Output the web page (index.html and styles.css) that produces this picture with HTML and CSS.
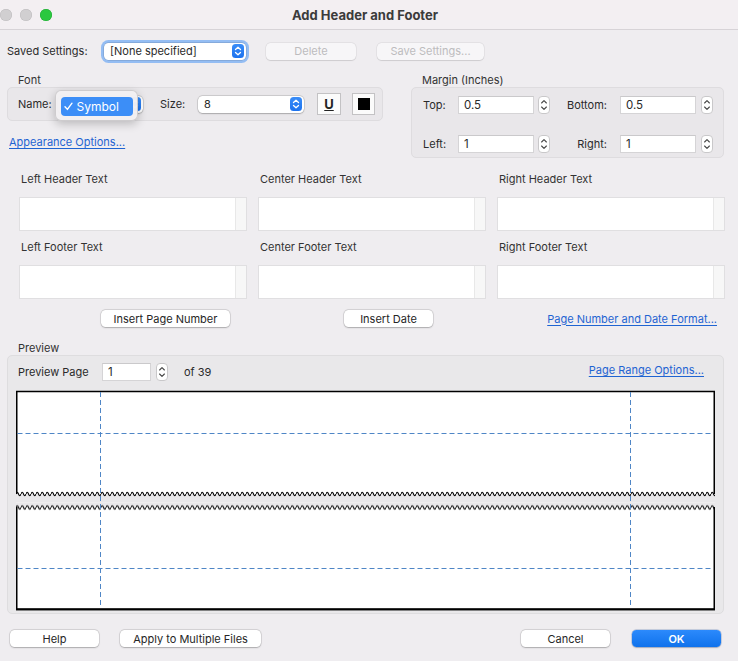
FILE: index.html
```html
<!DOCTYPE html>
<html>
<head>
<meta charset="utf-8">
<link rel="stylesheet" href="styles.css">
</head>
<body>
<div class="window">
  <div class="titlebar">
    <div class="lights"><span class="light gray"></span><span class="light gray"></span><span class="light green"></span></div>
    <div class="title">Add Header and Footer</div>
    <div></div>
  </div>

  <div class="saved-row">
    <span class="saved-label">Saved Settings:</span>
    <div class="select saved-select focus">
      <span class="select-text">[None specified]</span>
      <span class="arrow"><svg width="12" height="14" viewBox="0 0 12 14"><path d="M3.5 5.5L6 3.2L8.5 5.5M3.5 8.5L6 10.8L8.5 8.5" fill="none" stroke="#fff" stroke-width="1.3" stroke-linecap="round" stroke-linejoin="round"/></svg></span>
    </div>
    <button class="btn disabled delete-btn">Delete</button>
    <button class="btn disabled save-btn">Save Settings...</button>
  </div>

  <div class="top-groups">
    <div class="font-group">
      <div class="group-label">Font</div>
      <div class="box font-box">
        <span class="name-label">Name:</span>
        <div class="select name-select">
          <span class="select-text"></span>
          <span class="arrow"><svg width="12" height="14" viewBox="0 0 12 14"><path d="M3.5 5.5L6 3.2L8.5 5.5M3.5 8.5L6 10.8L8.5 8.5" fill="none" stroke="#fff" stroke-width="1.3" stroke-linecap="round" stroke-linejoin="round"/></svg></span>
        </div>
        <span class="size-label">Size:</span>
        <div class="select size-select">
          <span class="select-text">8</span>
          <span class="arrow"><svg width="12" height="14" viewBox="0 0 12 14"><path d="M3.5 5.5L6 3.2L8.5 5.5M3.5 8.5L6 10.8L8.5 8.5" fill="none" stroke="#fff" stroke-width="1.3" stroke-linecap="round" stroke-linejoin="round"/></svg></span>
        </div>
        <div class="square-btn u-btn"><span class="u-glyph">U</span></div>
        <div class="square-btn color-btn"><span class="swatch"></span></div>
        <div class="popup">
          <div class="popup-item">
            <svg class="check" width="9" height="9" viewBox="0 0 9 9"><path d="M1 4.8L3.4 7.4L8 1.2" fill="none" stroke="#fff" stroke-width="1.4" stroke-linecap="round" stroke-linejoin="round"/></svg>
            <span>Symbol</span>
          </div>
        </div>
      </div>
      <a class="link appearance-link" href="#">Appearance Options...</a>
    </div>

    <div class="margin-group">
      <div class="group-label">Margin (Inches)</div>
      <div class="box margin-box">
        <span class="m-label">Top:</span>
        <div class="input">0.5</div>
        <div class="stepper-cell"><svg class="stepper" width="12" height="18" viewBox="0 0 12 18"><rect x="0.5" y="0.5" width="11" height="17" rx="3.5" fill="#fff" stroke="#c9c8ca"/><path d="M3.6 7L6 4.6L8.4 7M3.6 11L6 13.4L8.4 11" fill="none" stroke="#444" stroke-width="1.1" stroke-linecap="round" stroke-linejoin="round"/></svg></div>
        <span class="m-label right">Bottom:</span>
        <div class="input">0.5</div>
        <div class="stepper-cell"><svg class="stepper" width="12" height="18" viewBox="0 0 12 18"><rect x="0.5" y="0.5" width="11" height="17" rx="3.5" fill="#fff" stroke="#c9c8ca"/><path d="M3.6 7L6 4.6L8.4 7M3.6 11L6 13.4L8.4 11" fill="none" stroke="#444" stroke-width="1.1" stroke-linecap="round" stroke-linejoin="round"/></svg></div>

        <span class="m-label">Left:</span>
        <div class="input">1</div>
        <div class="stepper-cell"><svg class="stepper" width="12" height="18" viewBox="0 0 12 18"><rect x="0.5" y="0.5" width="11" height="17" rx="3.5" fill="#fff" stroke="#c9c8ca"/><path d="M3.6 7L6 4.6L8.4 7M3.6 11L6 13.4L8.4 11" fill="none" stroke="#444" stroke-width="1.1" stroke-linecap="round" stroke-linejoin="round"/></svg></div>
        <span class="m-label right">Right:</span>
        <div class="input">1</div>
        <div class="stepper-cell"><svg class="stepper" width="12" height="18" viewBox="0 0 12 18"><rect x="0.5" y="0.5" width="11" height="17" rx="3.5" fill="#fff" stroke="#c9c8ca"/><path d="M3.6 7L6 4.6L8.4 7M3.6 11L6 13.4L8.4 11" fill="none" stroke="#444" stroke-width="1.1" stroke-linecap="round" stroke-linejoin="round"/></svg></div>
      </div>
    </div>
  </div>

  <div class="text-grid">
    <div class="cell"><div class="cell-label">Left Header Text</div><div class="textbox"><span class="scroll"></span></div></div>
    <div class="cell"><div class="cell-label">Center Header Text</div><div class="textbox"><span class="scroll"></span></div></div>
    <div class="cell"><div class="cell-label">Right Header Text</div><div class="textbox"><span class="scroll"></span></div></div>
    <div class="cell"><div class="cell-label">Left Footer Text</div><div class="textbox"><span class="scroll"></span></div></div>
    <div class="cell"><div class="cell-label">Center Footer Text</div><div class="textbox"><span class="scroll"></span></div></div>
    <div class="cell"><div class="cell-label">Right Footer Text</div><div class="textbox"><span class="scroll"></span></div></div>
  </div>

  <div class="insert-row">
    <button class="btn insert-page">Insert Page Number</button>
    <button class="btn insert-date">Insert Date</button>
    <a class="link format-link" href="#">Page Number and Date Format...</a>
  </div>

  <div class="preview-label">Preview</div>
  <div class="preview-box">
    <div class="preview-row">
      <span class="pp-label">Preview Page</span>
      <div class="input pp-input">1</div>
      <svg class="stepper pp-stepper" width="12" height="18" viewBox="0 0 12 18"><rect x="0.5" y="0.5" width="11" height="17" rx="3.5" fill="#fff" stroke="#c9c8ca"/><path d="M3.6 7L6 4.6L8.4 7M3.6 11L6 13.4L8.4 11" fill="none" stroke="#444" stroke-width="1.1" stroke-linecap="round" stroke-linejoin="round"/></svg>
      <span class="of-text">of 39</span>
      <a class="link range-link" href="#">Page Range Options...</a>
    </div>
    <svg class="page" width="699" height="221" viewBox="0 0 699 221">
      <defs>
        <pattern id="wt" x="0" y="99" width="5" height="10" patternUnits="userSpaceOnUse">
          <path d="M0 0H5V5Q3.75 8.5 2.5 5T0 5Z" fill="#fff"/>
          <path d="M0 5Q1.25 1.5 2.5 5T5 5" fill="none" stroke="#000" stroke-width="1.1"/>
        </pattern>
        <pattern id="wb" x="0" y="112.5" width="5" height="10" patternUnits="userSpaceOnUse">
          <path d="M0 5Q1.25 1.5 2.5 5T5 5V10H0Z" fill="#fff"/>
          <path d="M0 5Q1.25 1.5 2.5 5T5 5" fill="none" stroke="#000" stroke-width="1.1"/>
        </pattern>
      </defs>
      <rect x="0" y="1" width="699" height="99" fill="#fff"/>
      <rect x="0" y="99" width="699" height="10" fill="url(#wt)"/>
      <rect x="0" y="112.5" width="699" height="10" fill="url(#wb)"/>
      <rect x="0" y="121" width="699" height="98" fill="#fff"/>
      <path d="M0.75 104V1.5H698.25V104" fill="none" stroke="#000" stroke-width="1.5"/>
      <path d="M0.75 117V219.5H698.25V117" fill="none" stroke="#000" stroke-width="1.5"/>
      <path d="M0 219.2H699" stroke="#000" stroke-width="2"/>
      <path d="M1.5 43.5H697.5M1.5 178.5H697.5" stroke="#4f86c6" stroke-width="1" stroke-dasharray="5 3"/>
      <path d="M84.5 2V218M614.5 2V218" stroke="#4f86c6" stroke-width="1" stroke-dasharray="5 3"/>
    </svg>
  </div>

  <div class="bottom-row">
    <button class="btn help-btn">Help</button>
    <button class="btn apply-btn">Apply to Multiple Files</button>
    <button class="btn cancel-btn">Cancel</button>
    <button class="btn ok-btn">OK</button>
  </div>
</div>
</body>
</html>
```

FILE: styles.css
```css
* { box-sizing: border-box; }

html, body {
  margin: 0;
  padding: 0;
}

body {
  width: 738px;
  height: 661px;
  overflow: hidden;
  background: #efedf0;
  font-family: Inter, "Liberation Sans", Arial, sans-serif;
  font-size: 11px;
  color: #2a2a2a;
}

.window {
  display: flex;
  flex-direction: column;
  height: 661px;
}

/* Title bar */
.titlebar {
  height: 30px;
  border-bottom: 1px solid #d7d3d7;
  background: #f3eff2;
  display: grid;
  grid-template-columns: 1fr auto 1fr;
  align-items: center;
  padding-right: 8px;
}

.lights {
  display: flex;
  gap: 8px;
  padding-left: 0;
}

.light {
  width: 12px;
  height: 12px;
  border-radius: 50%;
}

.light.gray {
  background: #d1cfd1;
  box-shadow: inset 0 0 0 0.5px #bdbbbd;
}

.light.green {
  background: #2ac83f;
  box-shadow: inset 0 0 0 0.5px #1ea832;
}

.title {
  font-weight: 700;
  font-size: 13px;
  color: #3b3b3b;
}

/* Buttons */
.btn {
  font-family: inherit;
  font-size: 11px;
  color: #262626;
  background: #fff;
  border: none;
  border-radius: 4.5px;
  height: 17px;
  padding: 0;
  box-shadow: 0 0 0 0.5px rgba(0, 0, 0, 0.16), 0 0.5px 1.5px rgba(0, 0, 0, 0.22);
  display: flex;
  align-items: center;
  justify-content: center;
}

.btn.disabled {
  background: #f7f6f8;
  color: #bdbcbe;
  box-shadow: 0 0 0 0.5px rgba(0, 0, 0, 0.08), 0 0.5px 1px rgba(0, 0, 0, 0.1);
}

/* Saved settings row */
.saved-row {
  margin-top: 11px;
  height: 20px;
  display: flex;
  align-items: center;
  padding-left: 7px;
}

.saved-label {
  width: 97px;
}

.select {
  position: relative;
  height: 17px;
  background: #fff;
  border-radius: 4.5px;
  box-shadow: 0 0 0 0.5px rgba(0, 0, 0, 0.18), 0 0.5px 1.5px rgba(0, 0, 0, 0.2);
  display: flex;
  align-items: center;
  justify-content: space-between;
  padding: 0 2px 0 6px;
}

.select.focus {
  box-shadow: 0 0 0 0.5px rgba(0, 0, 0, 0.2), 0 0 0 3px #94bdf3;
}

.saved-select {
  width: 142px;
}

.arrow {
  width: 12px;
  height: 14px;
  border-radius: 3.5px;
  background: linear-gradient(#3a8df8, #1c72ee);
  display: flex;
}

.delete-btn {
  margin-left: 20px;
  width: 90px;
}

.save-btn {
  margin-left: 21px;
  width: 107px;
}

/* Top groups */
.top-groups {
  display: flex;
  margin-top: 12px;
  padding-left: 7px;
}

.group-label {
  height: 14px;
  line-height: 14px;
  padding-left: 11px;
  color: #333;
}

.box {
  background: #e9e7ea;
  border: 1px solid #dedcdf;
  border-radius: 5px;
}

.font-group {
  width: 376px;
  display: flex;
  flex-direction: column;
}

.font-box {
  position: relative;
  height: 34px;
  display: flex;
  align-items: center;
  padding-left: 10px;
}

.name-label {
  width: 40px;
}

.name-select {
  width: 85px;
}

.size-label {
  margin-left: 17px;
  width: 38px;
}

.size-select {
  width: 106px;
}

.square-btn {
  width: 24px;
  height: 22px;
  background: #fbfbfb;
  border: 1px solid #c3c2c4;
  display: flex;
  align-items: center;
  justify-content: center;
}

.u-btn {
  margin-left: 13px;
}

.u-glyph {
  font-weight: 700;
  font-size: 13px;
  text-decoration: underline;
  text-underline-offset: 1px;
  color: #222;
  line-height: 1;
}

.color-btn {
  margin-left: 11px;
  width: 23px;
}

.swatch {
  width: 12px;
  height: 12px;
  background: #000;
}

.popup {
  position: absolute;
  left: 47px;
  top: 2px;
  width: 83px;
  height: 31px;
  background: rgba(242, 240, 242, 0.97);
  border: 0.5px solid rgba(0, 0, 0, 0.15);
  border-radius: 6px;
  box-shadow: 0 3px 10px rgba(0, 0, 0, 0.22);
  padding: 5.5px 4.5px;
}

.popup-item {
  height: 19px;
  background: #3c8ef7;
  border-radius: 4px;
  color: #fff;
  font-size: 12px;
  display: flex;
  align-items: center;
  padding-left: 3px;
  gap: 4px;
}

.appearance-link {
  margin-top: 14px;
  margin-left: 2px;
  align-self: flex-start;
}

.link {
  color: #1f64d2;
  text-decoration: underline;
  text-underline-offset: 1.5px;
  line-height: 14px;
}

.margin-group {
  margin-left: 28px;
  width: 313px;
  display: flex;
  flex-direction: column;
}

.margin-box {
  height: 71px;
  display: grid;
  grid-template-columns: 35px 76px 16px 70px 76px 17px;
  grid-template-rows: 18px 18px;
  row-gap: 21px;
  align-items: center;
  padding: 8px 0 0 11px;
}

.m-label.right {
  text-align: right;
  padding-right: 13px;
}

.input {
  height: 18px;
  background: #fff;
  border: 1px solid #d5d4d6;
  border-top-color: #cac9cb;
  padding-left: 5px;
  display: flex;
  align-items: center;
  font-size: 11.5px;
}

.stepper-cell {
  display: flex;
  justify-content: flex-end;
}

.stepper {
  display: block;
}

/* Text grid */
.text-grid {
  margin-top: 14px;
  padding-left: 19px;
  display: grid;
  grid-template-columns: repeat(3, 228px);
  column-gap: 11px;
  row-gap: 9px;
}

.cell-label {
  height: 14px;
  line-height: 14px;
  padding-left: 2px;
  margin-bottom: 11px;
  color: #333;
}

.textbox {
  height: 34px;
  background: #fff;
  border: 1px solid #e0dfe1;
  display: flex;
  justify-content: flex-end;
}

.scroll {
  width: 11px;
  background: #f7f7f7;
  border-left: 1px solid #e8e8e8;
}

/* Insert row */
.insert-row {
  margin-top: 11px;
  height: 17px;
  display: flex;
  align-items: center;
  padding-left: 101px;
  padding-right: 21px;
}

.insert-page {
  width: 129px;
}

.insert-date {
  margin-left: 114px;
  width: 89px;
}

.format-link {
  margin-left: auto;
}

/* Preview */
.preview-label {
  margin-top: 14px;
  height: 14px;
  line-height: 14px;
  padding-left: 18px;
  color: #333;
}

.preview-box {
  margin-left: 7px;
  width: 717px;
  height: 259px;
  background: #e9e8ea;
  border: 1px solid #dedddf;
  border-radius: 5px;
  padding-top: 6px;
  display: flex;
  flex-direction: column;
}

.preview-row {
  height: 19px;
  display: flex;
  align-items: center;
  padding: 0 19px 0 10px;
}

.pp-label {
  width: 84px;
}

.pp-input {
  width: 49px;
}

.pp-stepper {
  margin-left: 5px;
}

.of-text {
  margin-left: 16px;
}

.range-link {
  margin-left: auto;
  margin-bottom: 3px;
}

.page {
  display: block;
  margin: 9px 0 0 8px;
}

/* Bottom buttons */
.bottom-row {
  margin-top: 16px;
  height: 17px;
  display: flex;
  align-items: center;
  padding-left: 10px;
}

.help-btn { width: 89px; }

.apply-btn {
  margin-left: 21px;
  width: 141px;
}

.cancel-btn {
  margin-left: 260px;
  width: 89px;
}

.ok-btn {
  margin-left: 22px;
  width: 89px;
  background: linear-gradient(#2c8afc, #0f72ec);
  color: #fff;
  font-weight: 600;
  box-shadow: 0 0 0 0.5px rgba(0, 60, 160, 0.3), 0 0.5px 1.5px rgba(0, 0, 0, 0.2);
}
```
